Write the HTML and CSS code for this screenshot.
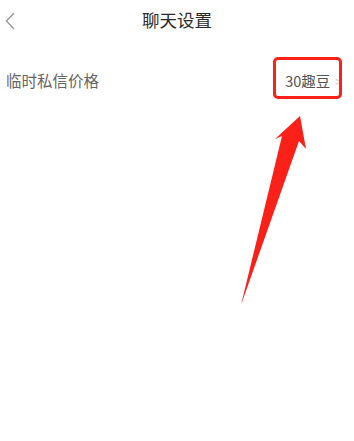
FILE: index.html
```html
<!DOCTYPE html>
<html lang="zh-CN">
  <head>
    <meta charset="UTF-8" />
    <meta name="viewport" content="width=device-width, initial-scale=1.0" />
    <title>聊天设置</title>
    <link rel="stylesheet" href="styles.css">
  </head>
  <body>
    <div class="top-nav">
      <div class="back">
        <svg width="10" height="18" viewBox="0 0 10 18">
          <path d="M9 1 L1.5 9 L9 17" fill="none" stroke="#9a9a9a" stroke-width="1.4" />
        </svg>
      </div>
      <div class="title">聊天设置</div>
      <div></div>
    </div>
    <div class="row">
      <div class="label">临时私信价格</div>
      <div class="value">
        <span>30趣豆</span>
        <span class="more">&gt;</span>
      </div>
      <!-- red mark from the screenshot -->
      <div class="mark"></div>
    </div>
    <svg class="arrow" width="354" height="441" viewBox="0 0 354 441">
      <polygon points="300,116 306,149 299,141 241,305 282,136 275,139" fill="#fb2118" />
    </svg>
  </body>
</html>
```

FILE: styles.css
```css
* {
  margin: 0;
  padding: 0;
  box-sizing: border-box;
}
body {
  font-family: "Noto Sans CJK SC", "Noto Sans", sans-serif;
  background: #fff;
  width: 354px;
  height: 441px;
  position: relative;
  overflow: hidden;
}

.top-nav {
  display: grid;
  grid-template-columns: 60px 1fr 60px;
  align-items: center;
  height: 38px;
  padding-top: 1px;
}
.back {
  padding-left: 5px;
  padding-top: 3px;
  display: flex;
}
.title {
  text-align: center;
  font-size: 17.5px;
  color: #2b2b2b;
}

.row {
  position: relative;
  display: flex;
  justify-content: space-between;
  align-items: center;
  height: 44px;
  margin-top: 20px;
  padding: 0 12px 0 6px;
}
.label {
  font-size: 15.5px;
  color: #666;
}
.value {
  display: flex;
  align-items: center;
  gap: 5px;
  font-size: 14.5px;
  color: #555;
}
.more {
  color: #c8c8c8;
  font-size: 12px;
}
.mark {
  position: absolute;
  right: 12px;
  top: -1px;
  width: 69px;
  height: 42px;
  border: 3px solid #fb2118;
  border-radius: 5px;
}

.arrow {
  position: absolute;
  left: 0;
  top: 0;
}
```
